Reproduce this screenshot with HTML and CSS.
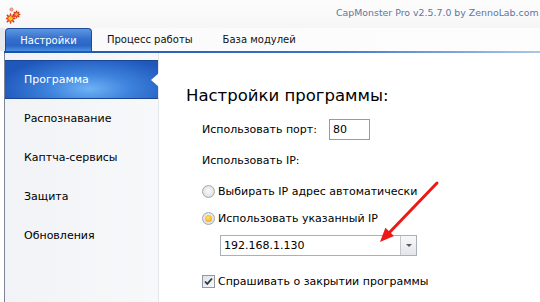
FILE: index.html
```html
<!DOCTYPE html>
<html lang="ru">
<head>
    <meta charset="UTF-8">
    <meta name="viewport" content="width=device-width, initial-scale=1.0">
    <title>CapMonster Pro</title>
    <link rel="stylesheet" href="styles.css">
</head>
<body>
<div class="window">
    <div class="titlebar">
        <svg class="app-icon" width="16" height="18" viewBox="0 0 16 18">
            <g stroke="#d8341e" stroke-width="1.5" stroke-linecap="round">
                <path d="M4.5 8v1M4.5 16v1M0.2 12.5h1M7.8 12.5h1M1.4 9.4l0.7 0.7M6.9 14.9l0.7 0.7M1.4 15.6l0.7-0.7M6.9 10.1l0.7-0.7"/>
                <path d="M10.5 5.3v0.8M10.5 10.9v0.8M7.3 8.5h0.8M12.9 8.5h0.8M8.2 6.2l0.6 0.6M12.2 10.2l0.6 0.6M8.2 10.8l0.6-0.6M12.2 6.8l0.6-0.6"/>
            </g>
            <g fill="#f7c21a" stroke="#d8341e" stroke-width="1">
                <circle cx="4.5" cy="12.5" r="2.8"/>
                <circle cx="10.5" cy="8.5" r="2"/>
            </g>
            <circle cx="5.5" cy="3.5" r="1.6" fill="#f3a98a" stroke="#e07a66" stroke-width="0.8"/>
        </svg>
        <span class="app-title">CapMonster Pro v2.5.7.0 by ZennoLab.com</span>
    </div>

    <div class="tabs">
        <div class="tab active">Настройки</div>
        <div class="tab">Процесс работы</div>
        <div class="tab">База модулей</div>
    </div>
    <div class="tab-line"></div>

    <div class="main">
        <ul class="side-menu">
            <li class="selected">Программа</li>
            <li>Распознавание</li>
            <li>Каптча-сервисы</li>
            <li>Защита</li>
            <li>Обновления</li>
        </ul>

        <div class="content">
            <h2>Настройки программы:</h2>

            <div class="row port-row">
                <span class="port-label">Использовать порт:</span>
                <input class="port-input" type="text" value="80">
            </div>

            <div class="row ip-label">Использовать IP:</div>

            <label class="row radio-row first">
                <span class="radio"></span>
                <span>Выбирать IP адрес автоматически</span>
            </label>

            <label class="row radio-row">
                <span class="radio checked"></span>
                <span>Использовать указанный IP</span>
            </label>

            <div class="combo">
                <span class="combo-value">192.168.1.130</span>
                <span class="combo-button"></span>
            </div>

            <label class="row check-row">
                <span class="checkbox">
                    <svg width="9" height="9" viewBox="0 0 9 9">
                        <path d="M1 4.5l2.3 2.4L8 1.5" fill="none" stroke="#2f3a44" stroke-width="1.8"/>
                    </svg>
                </span>
                <span>Спрашивать о закрытии программы</span>
            </label>
        </div>
    </div>

    <!-- стрелка поверх окна -->
    <svg class="pointer-arrow" width="540" height="302" viewBox="0 0 540 302">
        <line x1="437" y1="183" x2="388" y2="234" stroke="#ec1a14" stroke-width="3" stroke-linecap="round"/>
        <polygon points="380,242 385.4,227.7 394,236.1" fill="#ec1a14"/>
    </svg>
</div>
</body>
</html>
```

FILE: styles.css
```css
* {
    box-sizing: border-box;
}

body {
    margin: 0;
    width: 540px;
    height: 302px;
    overflow: hidden;
    font-family: 'DejaVu Sans', Verdana, sans-serif;
    color: #000;
    background-color: #fff;
}

.window {
    position: relative;
    width: 540px;
    height: 302px;
    overflow: hidden;
}

.titlebar {
    height: 28px;
    display: flex;
    align-items: center;
    padding-left: 6px;
    background: linear-gradient(#fdfdfd, #f6f6f7);
}

.app-icon {
    flex-shrink: 0;
    margin-top: 2px;
}

.app-title {
    flex-shrink: 0;
    margin-left: 314px;
    font-size: 9.4px;
    color: #61759f;
    white-space: nowrap;
    margin-top: -3px;
}

.tabs {
    height: 23px;
    display: flex;
    align-items: stretch;
    padding-left: 5px;
    background: linear-gradient(90deg, #e6e8eb 0, #e6e8eb 5px, #fafafa 5px, #fdfdfd 100%);
}

.tab {
    display: flex;
    align-items: center;
    padding: 0 15px;
    font-size: 10px;
    color: #111;
    white-space: nowrap;
}

.tab.active {
    width: 87px;
    justify-content: center;
    padding: 0;
    color: #fff;
    border: 1px solid #1d4c9e;
    border-bottom: none;
    border-radius: 4px 4px 0 0;
    background: linear-gradient(#5d98e2 0%, #3470cc 45%, #2b66c6 75%, #4a92e4 100%);
}

.tab-line {
    height: 2px;
    margin-left: 4px;
    background: linear-gradient(90deg, #1c50ab 0%, #3c74c8 60%, #a9c6ea 100%);
}

.main {
    display: flex;
    height: 249px;
    margin-left: 4px;
    border-left: 1px solid #7c8592;
}

.side-menu {
    list-style: none;
    margin: 0;
    padding: 7px 0 0;
    width: 154px;
    flex-shrink: 0;
    background: linear-gradient(90deg, #f1f3f6, #f6f8fa);
    border-right: 1px solid #e3e6eb;
}

.side-menu li {
    position: relative;
    height: 39px;
    display: flex;
    align-items: center;
    padding-left: 19px;
    font-size: 11px;
    color: #000;
}

.side-menu li.selected {
    color: #fff;
    border-top: 1px solid #1a4494;
    border-bottom: 1px solid #1a4494;
    background: radial-gradient(ellipse 60% 90% at 55% 75%, #6eb2f6 0%, #3d82dc 45%, #1f57bb 100%);
}

.side-menu li.selected::after {
    content: "";
    position: absolute;
    right: -1px;
    top: 12px;
    border-style: solid;
    border-width: 7px 8px 7px 0;
    border-color: transparent #fff transparent transparent;
}

.content {
    flex: 1;
    padding: 30px 0 0 27px;
    background-color: #fff;
}

.content h2 {
    margin: 0;
    height: 26px;
    line-height: 26px;
    font-size: 16.5px;
    font-weight: normal;
}

.row {
    display: flex;
    align-items: center;
    height: 20px;
    margin-left: 16px;
    font-size: 11px;
}

.port-row {
    height: 21px;
    margin-top: 10px;
    gap: 7px;
}

.port-label {
    width: 120px;
}

.port-input {
    width: 41px;
    height: 21px;
    border: 1px solid #8d9db5;
    padding: 0 3px;
    font-family: inherit;
    font-size: 11px;
    outline: none;
}

.ip-label {
    margin-top: 10px;
}

.radio-row {
    margin-top: 7px;
    gap: 3px;
}

.radio-row.first {
    margin-top: 11px;
}

.radio {
    width: 13px;
    height: 13px;
    border-radius: 50%;
    border: 1px solid #a3a8ae;
    background: radial-gradient(circle at 50% 45%, #fbfbfb 0%, #e4e5e7 60%, #c9ccd0 100%);
    display: flex;
    align-items: center;
    justify-content: center;
}

.radio.checked::after {
    content: "";
    width: 7px;
    height: 7px;
    border-radius: 50%;
    background: radial-gradient(circle at 45% 40%, #ffe27a 0%, #f6b820 60%, #d98d0c 100%);
}

.combo {
    display: flex;
    width: 197px;
    height: 21px;
    margin: 7px 0 0 34px;
    border: 1px solid #a9b0b9;
    background-color: #fff;
}

.combo-value {
    flex: 1;
    display: flex;
    align-items: center;
    padding-left: 3px;
    font-size: 11px;
}

.combo-button {
    width: 16px;
    border-left: 1px solid #c3c8cf;
    background: linear-gradient(#f7f8f9, #e3e6ea);
    display: flex;
    align-items: center;
    justify-content: center;
}

.combo-button::after {
    content: "";
    border-style: solid;
    border-width: 3px 3.5px 0 3.5px;
    border-color: #555b62 transparent transparent transparent;
}

.check-row {
    margin-top: 15px;
    gap: 3px;
}

.checkbox {
    width: 13px;
    height: 13px;
    border: 1px solid #8f99a5;
    background: linear-gradient(135deg, #dfe2e6, #f8f9fa);
    display: flex;
    align-items: center;
    justify-content: center;
}

.pointer-arrow {
    position: absolute;
    left: 0;
    top: 0;
    pointer-events: none;
}
```
